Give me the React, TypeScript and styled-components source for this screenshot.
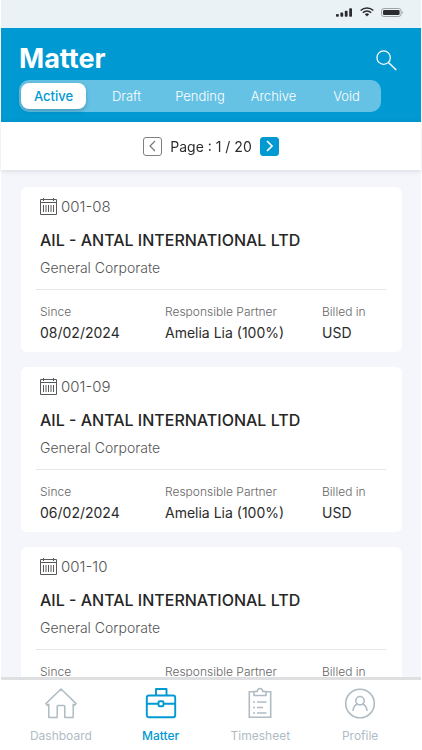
import React, { useState } from "react";
import styled, { createGlobalStyle, css } from "styled-components";

const blue = "#0099d2";

const GlobalStyle = createGlobalStyle`
  *, *::before, *::after { box-sizing: border-box; }
  body {
    margin: 0;
    background: #fff;
    font-family: Inter, "Liberation Sans", sans-serif;
    -webkit-font-smoothing: antialiased;
  }
  button, a { font: inherit; color: inherit; }
  h1, h2, p, dl, dd, dt, ul { margin: 0; padding: 0; }
`;

const Screen = styled.div`
  height: 100vh;
  padding: 0 1px;
  display: flex;
  flex-direction: column;
  overflow: hidden;
`;

const StatusBar = styled.div`
  flex: none;
  height: 28px;
  padding: 0 18px 4px 0;
  display: flex;
  justify-content: flex-end;
  align-items: center;
  gap: 7px;
  background: #eaf2f6;
`;

const Header = styled.header`
  flex: none;
  padding: 13px 20px 10px 18px;
  background: ${blue};
  color: #fff;
`;

const TitleRow = styled.div`
  height: 39px;
  display: flex;
  justify-content: space-between;
  align-items: flex-start;
`;

const PageTitle = styled.h1`
  font-size: 27px;
  line-height: 36px;
  font-weight: 700;
`;

const PlainButton = styled.button`
  display: flex;
  padding: 0;
  border: 0;
  background: none;
  cursor: pointer;
`;

const SearchButton = styled(PlainButton)`
  padding: 9px 4px 0 0;
`;

const Tabs = styled.div`
  margin-right: 20px;
  height: 32px;
  padding: 3px 2px;
  display: grid;
  grid-template-columns: 65fr 81fr 66fr 81fr 65fr;
  border-radius: 10px;
  background: #66c2e4;
`;

const Tab = styled.button<{ $active: boolean }>`
  padding: 0;
  border: 0;
  border-radius: 8px;
  background: none;
  font-size: 13px;
  line-height: 26px;
  font-weight: 300;
  color: #fff;
  cursor: pointer;
  ${(p) =>
    p.$active &&
    css`
      background: #fff;
      color: ${blue};
      font-weight: 500;
      box-shadow: 0 2px 4px rgba(0, 60, 90, 0.3);
    `}
`;

const Pager = styled.nav`
  position: relative;
  z-index: 1;
  flex: none;
  height: 48px;
  display: flex;
  justify-content: center;
  align-items: center;
  gap: 8px;
  background: #fff;
  box-shadow: 0 1px 5px rgba(40, 40, 60, 0.14);
  font-size: 14px;
  color: #2b2b2b;
`;

const PageButton = styled(PlainButton)<{ $filled?: boolean }>`
  width: 19px;
  height: 19px;
  justify-content: center;
  align-items: center;
  border: 1px solid ${(p) => (p.$filled ? blue : "#808080")};
  border-radius: 3px;
  background: ${(p) => (p.$filled ? blue : "#fff")};
  color: ${(p) => (p.$filled ? "#fff" : "#777")};
`;

const List = styled.main`
  flex: 1;
  min-height: 0;
  padding: 17px 19px 17px 20px;
  display: flex;
  flex-direction: column;
  gap: 15px;
  overflow-y: auto;
  scrollbar-width: none;
  background: #f5f6fb;
`;

const Card = styled.article`
  flex: none;
  padding: 8px 16px 8px 15px;
  border-radius: 6px;
  background: #fff;
`;

const CardHead = styled.div`
  padding: 0 4px 11px;
  border-bottom: 1px solid #e6e6e8;
`;

const Code = styled.p`
  display: flex;
  align-items: center;
  gap: 4px;
  font-size: 15px;
  line-height: 24px;
  font-weight: 300;
  color: #555;
`;

const Client = styled.h2`
  margin-top: 7px;
  font-size: 16px;
  line-height: 28px;
  font-weight: 500;
  color: #262626;
  white-space: nowrap;
`;

const Category = styled.p`
  margin-top: 4px;
  font-size: 14px;
  line-height: 20px;
  font-weight: 300;
  color: #555;
`;

const Details = styled.dl`
  padding: 14px 0 0 4px;
  display: grid;
  grid-template-columns: 125fr 157fr 64fr;
`;

const Label = styled.dt`
  font-size: 12px;
  line-height: 16px;
  font-weight: 300;
  color: #666;
  white-space: nowrap;
`;

const Value = styled.dd`
  margin-top: 2px;
  font-size: 14px;
  line-height: 22px;
  color: #2b2b2b;
  white-space: nowrap;
`;

const BottomNav = styled.nav`
  flex: none;
  height: 73px;
  padding: 7px 11px 0 10px;
  display: grid;
  grid-template-columns: repeat(4, 1fr);
  border-top: 3px solid #dedfe1;
  background: #fff;
`;

const NavItem = styled.a<{ $active?: boolean }>`
  display: flex;
  flex-direction: column;
  align-items: center;
  gap: 8px;
  font-size: 12px;
  line-height: 18px;
  font-weight: ${(p) => (p.$active ? 500 : 400)};
  color: ${(p) => (p.$active ? blue : "#afbcc3")};
  text-decoration: none;
`;

const SignalIcon = () => (
  <svg width="17" height="9" viewBox="0 0 17 9" fill="#2c2c2e" aria-hidden="true">
    <rect x="0" y="6" width="2.8" height="2.8" rx=".8" />
    <rect x="4.4" y="4.6" width="2.8" height="4.2" rx=".8" />
    <rect x="8.8" y="2.8" width="2.8" height="6" rx=".8" />
    <rect x="13.2" y=".3" width="2.8" height="8.5" rx=".8" />
  </svg>
);

const WifiIcon = () => (
  <svg width="14" height="10" viewBox="0 0 15 10" fill="none" stroke="#2c2c2e" strokeWidth="1.6" aria-hidden="true">
    <path d="M.7 3.4a9.8 9.8 0 0 1 13.6 0" />
    <path d="M3 5.9a6.4 6.4 0 0 1 9 0" />
    <path d="M5.2 7.5a3.3 3.3 0 0 1 4.6 0L7.5 9.8Z" fill="#2c2c2e" stroke="none" />
  </svg>
);

const BatteryIcon = () => (
  <svg width="22" height="9" viewBox="0 0 22 9" aria-hidden="true">
    <rect x=".5" y=".5" width="19.6" height="8" rx="2.4" fill="none" stroke="#9da2a5" />
    <rect x="2" y="2" width="16.6" height="5" rx="1.2" fill="#2c2c2e" />
    <path d="M21 3v3c1-.5 1-2.5 0-3Z" fill="#9da2a5" />
  </svg>
);

const SearchIcon = () => (
  <svg width="21" height="21" viewBox="0 0 22 22" fill="none" stroke="#fff" strokeWidth="1.3" aria-hidden="true">
    <circle cx="8" cy="8" r="7" />
    <path d="m13 13 8.2 8" strokeWidth="1.5" />
  </svg>
);

const Chevron = ({ right }: { right?: boolean }) => (
  <svg width="11" height="12" viewBox="0 0 11 12" fill="none" stroke="currentColor" strokeWidth={right ? 1.7 : 1.2} aria-hidden="true">
    <path d={right ? "m3 1 5 5-5 5" : "M8 1 3 6l5 5"} />
  </svg>
);

const CalendarIcon = () => (
  <svg width="17" height="18" viewBox="0 0 17 18" fill="none" stroke="#5a5a5a" strokeWidth="1" aria-hidden="true">
    <path d="M.5 1.500h16v15H.5Z M.5 4.500h16 M3.500 0v3 M13.500 0v3" />
    <path d="M3.500 7v7 M6 7v7 M8.500 7v7 M11 7v7 M13.500 7v7" />
  </svg>
);

const navIcon = { width: 32, height: 32, viewBox: "0 0 32 32", fill: "none", stroke: "currentColor", "aria-hidden": true } as const;

const HomeIcon = () => (
  <svg {...navIcon} strokeWidth="1.5" strokeLinejoin="round">
    <path d="M3.800 17.200v13.300h8.400V19.500c0-.6.400-1 1-1h5.600c.6 0 1 .4 1 1v11h8.400V17.200l1.300 1.200 1.600-1.800L16 2 .9 16.600l1.600 1.800 1.300-1.200Z" />
  </svg>
);

const BriefcaseIcon = () => (
  <svg {...navIcon} strokeWidth="1.9" strokeLinejoin="round">
    <rect x="1.800" y="8.500" width="28.400" height="21.700" rx="2" />
    <path d="M11 8.500V2h10.500v6.500 M1.800 16.800h11.500 M18.700 16.800h11.500" />
    <rect x="13.500" y="14.300" width="5" height="5" rx="1.300" />
  </svg>
);

const ClipboardIcon = () => (
  <svg {...navIcon} strokeWidth="1.6">
    <path d="M9.500 4.800H5.300v25.400h21.400V4.800h-4.200" />
    <path d="M10 8.500v-4h3.200c.2-1.900 1.100-3 2.800-3s2.600 1.100 2.800 3H22v4Z" />
    <path d="M13 15h9.500 M13 20.500h6 M13 26h9.500 M9 15h2 M9 20.500h2 M9 26h2" />
  </svg>
);

const ProfileIcon = () => (
  <svg {...navIcon} strokeWidth="1.6">
    <circle cx="16" cy="16.500" r="14.300" />
    <circle cx="16" cy="13.700" r="4.200" />
    <path d="M9 24c.3-3.900 2.300-6.500 5-7 M23 24c-.3-3.900-2.300-6.500-5-7" />
  </svg>
);

const tabs = ["Active", "Draft", "Pending", "Archive", "Void"];

const matters = [
  { code: "001-08", since: "08/02/2024" },
  { code: "001-09", since: "06/02/2024" },
  { code: "001-10", since: "06/02/2024" },
];

const navItems = [
  { label: "Dashboard", Icon: HomeIcon },
  { label: "Matter", Icon: BriefcaseIcon },
  { label: "Timesheet", Icon: ClipboardIcon },
  { label: "Profile", Icon: ProfileIcon },
];

export default function App() {
  const [tab, setTab] = useState("Active");
  return (
    <>
      <GlobalStyle />
      <Screen>
        <StatusBar>
          <SignalIcon />
          <WifiIcon />
          <BatteryIcon />
        </StatusBar>
        <Header>
          <TitleRow>
            <PageTitle>Matter</PageTitle>
            <SearchButton type="button" aria-label="Search">
              <SearchIcon />
            </SearchButton>
          </TitleRow>
          <Tabs role="tablist">
            {tabs.map((name) => (
              <Tab key={name} type="button" role="tab" aria-selected={tab === name} $active={tab === name} onClick={() => setTab(name)}>
                {name}
              </Tab>
            ))}
          </Tabs>
        </Header>
        <Pager aria-label="Pages">
          <PageButton type="button" aria-label="Previous page">
            <Chevron />
          </PageButton>
          <span>Page : 1 / 20</span>
          <PageButton type="button" aria-label="Next page" $filled>
            <Chevron right />
          </PageButton>
        </Pager>
        <List>
          {matters.map((m) => (
            <Card key={m.code}>
              <CardHead>
                <Code>
                  <CalendarIcon />
                  {m.code}
                </Code>
                <Client>AIL - ANTAL INTERNATIONAL LTD</Client>
                <Category>General Corporate</Category>
              </CardHead>
              <Details>
                <div>
                  <Label>Since</Label>
                  <Value>{m.since}</Value>
                </div>
                <div>
                  <Label>Responsible Partner</Label>
                  <Value>Amelia Lia (100%)</Value>
                </div>
                <div>
                  <Label>Billed in</Label>
                  <Value>USD</Value>
                </div>
              </Details>
            </Card>
          ))}
        </List>
        <BottomNav aria-label="Main">
          {navItems.map(({ label, Icon }) => (
            <NavItem key={label} href={`#${label.toLowerCase()}`} $active={label === "Matter"} aria-current={label === "Matter" ? "page" : undefined}>
              <Icon />
              {label}
            </NavItem>
          ))}
        </BottomNav>
      </Screen>
    </>
  );
}
